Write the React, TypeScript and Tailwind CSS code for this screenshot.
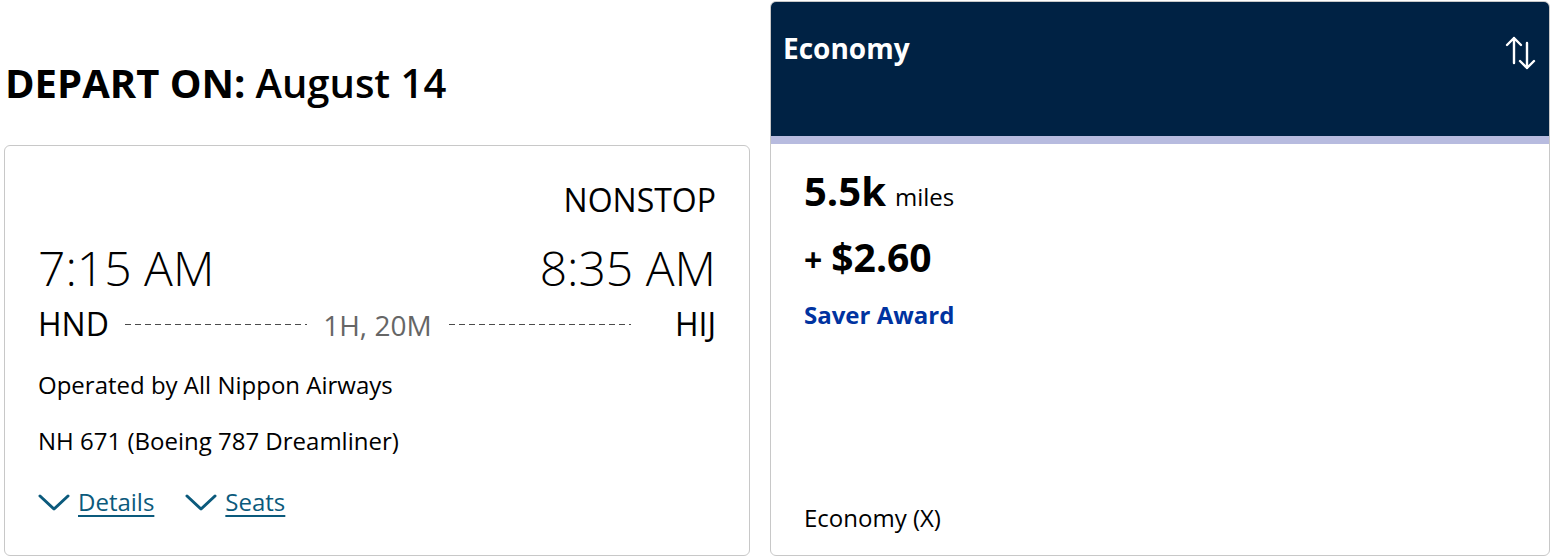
import type { ReactNode } from 'react';

function Chevron() {
  return (
    <svg width="32" height="20" viewBox="0 0 32 20" fill="none" className="mr-[8px] shrink-0">
      <path d="M2 4 L16 17 L30 4" stroke="#0b5a7c" strokeWidth="3" strokeLinecap="round" strokeLinejoin="round" />
    </svg>
  );
}

function SortIcon() {
  return (
    <svg width="32" height="36" viewBox="0 0 32 36" fill="none">
      <path d="M9 28 V3 M2 10 L9 3 L16 10" stroke="white" strokeWidth="2.4" strokeLinecap="round" strokeLinejoin="round" />
      <path d="M22 8 V33 M15 26 L22 33 L29 26" stroke="white" strokeWidth="2.4" strokeLinecap="round" strokeLinejoin="round" />
    </svg>
  );
}

function Dashes({ className }: { className: string }) {
  return (
    <div
      className={`h-[1px] flex-1 self-center bg-[repeating-linear-gradient(to_right,#4a4a4a_0_6px,transparent_6px_10px)] ${className}`}
    />
  );
}

function ToggleLink({ children }: { children: ReactNode }) {
  return (
    <a href="#" className="flex items-center text-[24px] leading-none text-[#0b5a7c] underline underline-offset-[4px]">
      <Chevron />
      <span>{children}</span>
    </a>
  );
}

export default function App() {
  return (
    <div className="flex items-start bg-white px-[4px] font-['Open_Sans',sans-serif] text-black">
      <div className="w-[746px] shrink-0">
        <h1 className="flex h-[145px] items-center pb-[1px] pl-[1px] pt-[21px] text-[40px] leading-none">
          <span className="font-bold">DEPART ON:</span>
          <span className="ml-[10px] font-semibold">August 14</span>
        </h1>

        <div className="h-[411px] rounded-[6px] border border-[#c8c8c8] px-[33px] pt-[38px]">
          <div className="text-right text-[32px] leading-none">NONSTOP</div>

          <div className="mt-[28px] flex justify-between text-[48px] font-light leading-none">
            <span>7:15 AM</span>
            <span>8:35 AM</span>
          </div>

          <div className="mt-[16px] flex items-baseline text-[32px] leading-none">
            <span>HND</span>
            <Dashes className="mx-[16px]" />
            <span className="text-[28px] text-[#666666]">1H, 20M</span>
            <Dashes className="ml-[17px] mr-[44px]" />
            <span>HIJ</span>
          </div>

          <p className="mt-[33px] text-[24px] leading-none">Operated by All Nippon Airways</p>
          <p className="mt-[32px] text-[24px] leading-none">NH 671 (Boeing 787 Dreamliner)</p>

          <div className="mt-[37px] flex gap-[31px]">
            <ToggleLink>Details</ToggleLink>
            <ToggleLink>Seats</ToggleLink>
          </div>
        </div>
      </div>

      <div className="ml-[20px] mt-[1px] flex h-[555px] flex-1 flex-col overflow-hidden rounded-[6px] border border-[#c8c8c8]">
        <div className="flex h-[134px] items-start justify-between bg-[#002244] pl-[12px] pr-[12px] pt-[32px]">
          <span className="text-[28px] font-bold leading-none text-white">Economy</span>
          <span className="mt-[1px]">
            <SortIcon />
          </span>
        </div>
        <div className="h-[8px] bg-[#b7bbdf]" />
        <div className="flex flex-1 flex-col px-[33px] pb-[25px] pt-[27px]">
          <div className="flex items-baseline leading-none">
            <span className="text-[40px] font-bold">5.5k</span>
            <span className="ml-[9px] text-[24px]">miles</span>
          </div>
          <div className="mt-[26px] flex items-baseline leading-none">
            <span className="text-[32px] font-bold">+</span>
            <span className="ml-[9px] text-[39px] font-bold">$2.60</span>
          </div>
          <div className="mt-[27px] text-[24px] font-bold leading-none text-[#0033a0]">Saver Award</div>
          <div className="mt-auto text-[24px] leading-none">Economy (X)</div>
        </div>
      </div>
    </div>
  );
}
